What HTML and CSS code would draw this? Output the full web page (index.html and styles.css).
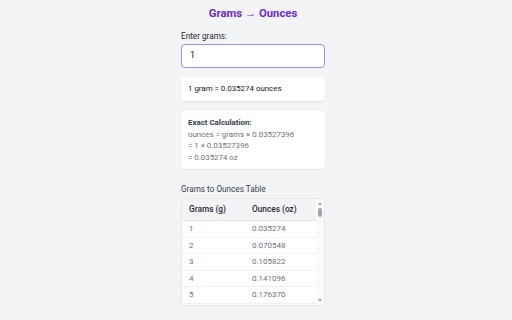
FILE: index.html
```html
<!DOCTYPE html>
<html>
<head>
<meta charset="utf-8">
<link rel="stylesheet" href="styles.css">
</head>
<body>
<div class="app">
  <h1 class="title">Grams → Ounces</h1>
  <label class="label">Enter grams:</label>
  <div class="input">1</div>
  <div class="card result">1 gram = 0.035274 ounces</div>
  <div class="card calc">
    <div class="calc-head">Exact Calculation:</div>
    <div>ounces = grams × 0.03527396</div>
    <div>= 1 × 0.03527396</div>
    <div>= 0.035274 oz</div>
  </div>
  <div class="table-title">Grams to Ounces Table</div>
  <div class="table-card">
    <div class="table-scroll">
      <div class="row head"><span>Grams (g)</span><span>Ounces (oz)</span></div>
      <div class="row"><span>1</span><span>0.035274</span></div>
      <div class="row"><span>2</span><span>0.070548</span></div>
      <div class="row"><span>3</span><span>0.105822</span></div>
      <div class="row"><span>4</span><span>0.141096</span></div>
      <div class="row"><span>5</span><span>0.176370</span></div>
    </div>
    <div class="scrollbar">
      <div class="arrow up"></div>
      <div class="thumb"></div>
      <div class="arrow down"></div>
    </div>
  </div>
</div>
</body>
</html>
```
FILE: styles.css
```css
html, body {
  margin: 0;
  height: 100%;
  background: #f3f4f6;
}
body {
  padding-right: 6px;
  font-family: Roboto, "Noto Sans", sans-serif;
  color: #1f2937;
  overflow: hidden;
}
.app {
  width: 144px;
  margin: 0 auto;
  display: flex;
  flex-direction: column;
}
.title {
  margin: 6px 0 0;
  font-size: 11.3px;
  line-height: 16px;
  font-weight: 700;
  color: #6d28d9;
  text-align: center;
}
.label {
  margin-top: 8px;
  font-size: 8.2px;
  line-height: 12px;
  color: #1f2937;
}
.input {
  margin-top: 2px;
  height: 24px;
  box-sizing: border-box;
  border: 1.5px solid #a78bfa;
  border-radius: 4px;
  background: #fff;
  font-size: 9px;
  line-height: 21px;
  padding-left: 8px;
  color: #111827;
}
.card {
  background: #fff;
  border-radius: 4px;
  box-shadow: 0 1px 2px rgba(0,0,0,0.08);
}
.result {
  margin-top: 9px;
  height: 24px;
  box-sizing: border-box;
  padding: 0 7px;
  font-size: 7.9px;
  line-height: 24px;
  color: #111827;
}
.calc {
  margin-top: 10px;
  padding: 6px 7px 6px;
  font-size: 7.9px;
  line-height: 11.5px;
  color: #6b7280;
}
.calc-head {
  font-weight: 700;
  color: #374151;
}
.table-title {
  margin-top: 14px;
  font-size: 8.2px;
  line-height: 12px;
  color: #374151;
}
.table-card {
  margin-top: 3px;
  height: 108px;
  box-sizing: border-box;
  background: #fff;
  border: 1px solid #e5e7eb;
  border-radius: 4px;
  display: flex;
  overflow: hidden;
}
.table-scroll {
  flex: 1;
  display: flex;
  flex-direction: column;
}
.row {
  flex: none;
  display: grid;
  grid-template-columns: 63px 1fr;
  padding-left: 7px;
  height: 16.5px;
  box-sizing: border-box;
  border-bottom: 1px solid #eef0f2;
  font-size: 8px;
  line-height: 15.5px;
  color: #6b7280;
}
.row.head {
  height: 22px;
  line-height: 21px;
  background: #f3f4f6;
  font-weight: 500;
  font-size: 8.3px;
  color: #1f2937;
  border-bottom: 1px solid #e5e7eb;
}
.scrollbar {
  width: 8px;
  background: #f9fafb;
  display: flex;
  flex-direction: column;
  align-items: center;
  padding: 3px 0;
  box-sizing: border-box;
}
.thumb {
  width: 4px;
  height: 9px;
  margin-top: 3px;
  border-radius: 2px;
  background: #9ca3af;
}
.arrow {
  width: 0;
  height: 0;
  border-left: 2.5px solid transparent;
  border-right: 2.5px solid transparent;
}
.arrow.up { border-bottom: 3px solid #9ca3af; }
.arrow.down { border-top: 3px solid #9ca3af; margin-top: auto; }
```
